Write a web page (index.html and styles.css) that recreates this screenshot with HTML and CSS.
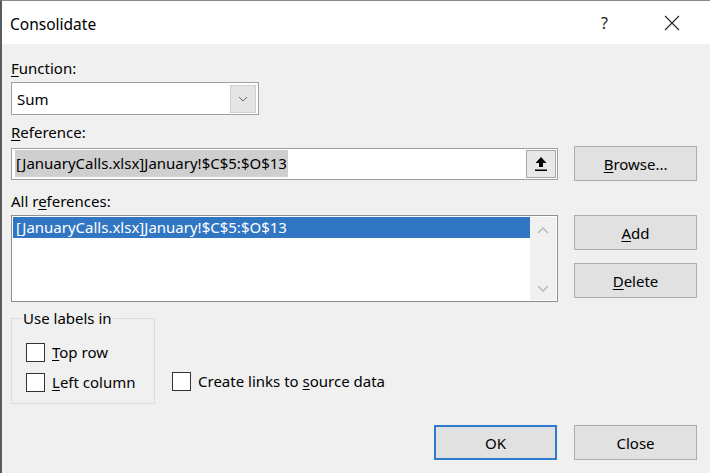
FILE: index.html
```html
<!DOCTYPE html>
<html lang="en">
<head>
  <meta charset="UTF-8">
  <title>Consolidate</title>
  <link rel="stylesheet" href="styles.css">
</head>
<body>
  <div class="dialog">
    <!-- Barra de título -->
    <div class="titlebar">
      <span class="title">Consolidate</span>
      <span class="help">?</span>
      <svg class="close-x" width="16" height="16" viewBox="0 0 16 16">
        <path d="M1 1 L15 15 M15 1 L1 15" stroke="#222" stroke-width="1.1" fill="none"></path>
      </svg>
    </div>

    <div class="content">
      <div class="label first"><u>F</u>unction:</div>
      <div class="combo">
        <span class="combo-text">Sum</span>
        <span class="combo-btn">
          <svg width="10" height="6" viewBox="0 0 10 6">
            <path d="M1 1 L5 5 L9 1" stroke="#666" stroke-width="1" fill="none"></path>
          </svg>
        </span>
      </div>

      <div class="label"><u>R</u>eference:</div>
      <div class="row center">
        <div class="refbox">
          <span class="sel-text">[JanuaryCalls.xlsx]January!$C$5:$O$13</span>
          <span class="collapse-btn">
            <svg width="14" height="16" viewBox="0 0 14 16">
              <path d="M7 1 L12.5 7 L9 7 L9 11 L5 11 L5 7 L1.5 7 Z" fill="#000"></path>
              <rect x="1" y="13.5" width="12" height="1.5" fill="#000"></rect>
            </svg>
          </span>
        </div>
        <button class="btn"><u>B</u>rowse...</button>
      </div>

      <div class="label refs">All r<u>e</u>ferences:</div>
      <div class="row">
        <div class="listbox">
          <div class="list-items">
            <div class="item selected">[JanuaryCalls.xlsx]January!$C$5:$O$13</div>
          </div>
          <div class="scrollbar">
            <svg width="12" height="8" viewBox="0 0 12 8">
              <path d="M1 7 L6 2 L11 7" stroke="#bdbdbd" stroke-width="1.6" fill="none"></path>
            </svg>
            <svg width="12" height="8" viewBox="0 0 12 8">
              <path d="M1 1 L6 6 L11 1" stroke="#bdbdbd" stroke-width="1.6" fill="none"></path>
            </svg>
          </div>
        </div>
        <div class="btn-col">
          <button class="btn"><u>A</u>dd</button>
          <button class="btn"><u>D</u>elete</button>
        </div>
      </div>

      <div class="row bottom">
        <fieldset class="group">
          <legend>Use labels in</legend>
          <label class="check"><span class="box"></span><span><u>T</u>op row</span></label>
          <label class="check"><span class="box"></span><span><u>L</u>eft column</span></label>
        </fieldset>
        <label class="check links"><span class="box"></span><span>Create links to <u>s</u>ource data</span></label>
      </div>

      <div class="actions">
        <button class="btn default">OK</button>
        <button class="btn">Close</button>
      </div>
    </div>
  </div>
</body>
</html>
```

FILE: styles.css
```css
body {
  margin: 0;
  font-family: "Noto Sans", "Open Sans", sans-serif;
  font-size: 15px;
  color: #000;
  background: #f0f0f0;
}
u {
  text-decoration-thickness: 1px;
  text-underline-offset: 2px;
}
/* Ventana del diálogo */
.dialog {
  width: 710px;
  height: 473px;
  box-sizing: border-box;
  border-left: 2px solid #5b5b5b;
  border-top: 1px solid #8a8a8a;
  background: #f0f0f0;
  overflow: hidden;
}
.titlebar {
  height: 43px;
  background: #fff;
  display: flex;
  align-items: center;
  padding-left: 8px;
}
.title {
  font-size: 15.5px;
  flex: 1;
  padding-top: 2px;
}
.help {
  font-size: 16px;
  color: #222;
  margin-right: 56px;
}
.close-x {
  margin-right: 30px;
}
.content {
  padding: 0 13px 0 9px;
}
.label {
  height: 20px;
  line-height: 20px;
  margin-top: 7px;
}
.label.first {
  margin-top: 14px;
}
.label.refs {
  margin-top: 10px;
}
.row {
  display: flex;
  gap: 16px;
  margin-top: 4px;
}
.row.center {
  align-items: center;
}
/* Cuadro combinado */
.combo {
  height: 31px;
  margin-top: 4px;
  border: 1px solid #a0a0a0;
  background: #fff;
  display: flex;
  align-items: center;
  justify-content: space-between;
  padding: 0 2px 0 5px;
  width: 239px;
}
.combo-btn {
  width: 24px;
  height: 26px;
  background: #e5e5e5;
  border: 1px solid #cfcfcf;
  display: flex;
  align-items: center;
  justify-content: center;
}
/* Cuadro de referencia */
.refbox {
  height: 30px;
  border: 1px solid #a0a0a0;
  background: #fff;
  display: flex;
  align-items: center;
  justify-content: space-between;
  padding: 0 1px 0 3px;
  width: 542px;
}
.sel-text {
  background: #cfcfcf;
  line-height: 27px;
  padding: 0 1px;
}
.collapse-btn {
  width: 28px;
  height: 26px;
  background: #e8e8e8;
  border: 1px solid #a8a8a8;
  display: flex;
  align-items: center;
  justify-content: center;
}
.btn {
  width: 123px;
  height: 35px;
  font-family: inherit;
  font-size: 15px;
  color: #000;
  background: #e1e1e1;
  border: 1px solid #adadad;
  padding: 0;
}
.btn.default {
  border: 2px solid #2f7bcf;
}
/* Lista de referencias */
.listbox {
  width: 544px;
  height: 83px;
  border: 1px solid #8e8e8e;
  background: #fff;
  display: flex;
  padding: 1px;
}
.list-items {
  flex: 1;
}
.item {
  line-height: 21px;
  padding-left: 3px;
}
.item.selected {
  background: #3176c2;
  color: #fff;
}
.scrollbar {
  width: 26px;
  background: #f0f0f0;
  display: flex;
  flex-direction: column;
  align-items: center;
  justify-content: space-between;
  padding: 9px 0 7px;
}
.btn-col {
  display: flex;
  flex-direction: column;
  gap: 13px;
}
/* Grupo de casillas */
.row.bottom {
  align-items: flex-end;
  gap: 17px;
  margin-top: 7px;
}
.group {
  width: 144px;
  height: 95px;
  box-sizing: border-box;
  margin: 0;
  border: 1px solid #dcdcdc;
  padding: 16px 0 0 14px;
  display: flex;
  flex-direction: column;
  gap: 11px;
}
.group legend {
  padding: 0 1px;
  margin-left: -4px;
  line-height: 18px;
}
.check {
  display: flex;
  align-items: center;
  gap: 7px;
  line-height: 19px;
}
.box {
  width: 17px;
  height: 17px;
  border: 1px solid #333;
  background: #fff;
}
.check.links {
  margin-bottom: 13px;
}
.actions {
  display: flex;
  justify-content: flex-end;
  gap: 17px;
  margin-top: 21px;
}
```
